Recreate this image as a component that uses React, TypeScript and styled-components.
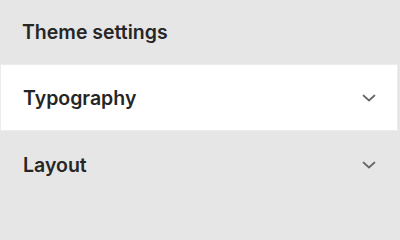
import React, { useState } from "react";
import styled, { createGlobalStyle } from "styled-components";

const GlobalStyle = createGlobalStyle`
  html, body {
    margin: 0;
    padding: 0;
    background: #e6e6e6;
    font-family: Inter, "Noto Sans", sans-serif;
    color: #222;
  }
`;

const Panel = styled.div`
  width: 400px;
  height: 200px;
  background: #e6e6e6;
  display: flex;
  flex-direction: column;
`;

const Title = styled.h2`
  margin: 0;
  height: 64px;
  padding: 0 22px;
  display: flex;
  align-items: center;
  font-size: 19.5px;
  font-weight: 600;
  color: #262626;
`;

const Section = styled.div<{ open?: boolean }>`
  height: 67px;
  box-sizing: border-box;
  margin-right: 2px;
  padding: 0 22px;
  display: flex;
  align-items: center;
  justify-content: space-between;
  background: ${({ open }) => (open ? "#fff" : "transparent")};
  border: 1px solid ${({ open }) => (open ? "#ececec" : "transparent")};
  cursor: pointer;
`;

const SectionLabel = styled.span`
  font-size: 19.5px;
  font-weight: 600;
  color: #262626;
`;

const Chevron = styled.svg`
  width: 16px;
  height: 16px;
  margin-right: -2px;
  color: #666;
`;

const ChevronIcon = () => (
  <Chevron viewBox="0 0 16 16" fill="none">
    <path
      d="M2.5 5.5L8 10.5L13.5 5.5"
      stroke="currentColor"
      strokeWidth="1.7"
      strokeLinecap="round"
      strokeLinejoin="round"
    />
  </Chevron>
);

const sections = ["Typography", "Layout"];

export default function App() {
  const [active, setActive] = useState("Typography");

  return (
    <>
      <GlobalStyle />
      <Panel>
        <Title>Theme settings</Title>
        {sections.map((name) => (
          <Section
            key={name}
            open={active === name}
            onClick={() => setActive(name)}
          >
            <SectionLabel>{name}</SectionLabel>
            <ChevronIcon />
          </Section>
        ))}
      </Panel>
    </>
  );
}
